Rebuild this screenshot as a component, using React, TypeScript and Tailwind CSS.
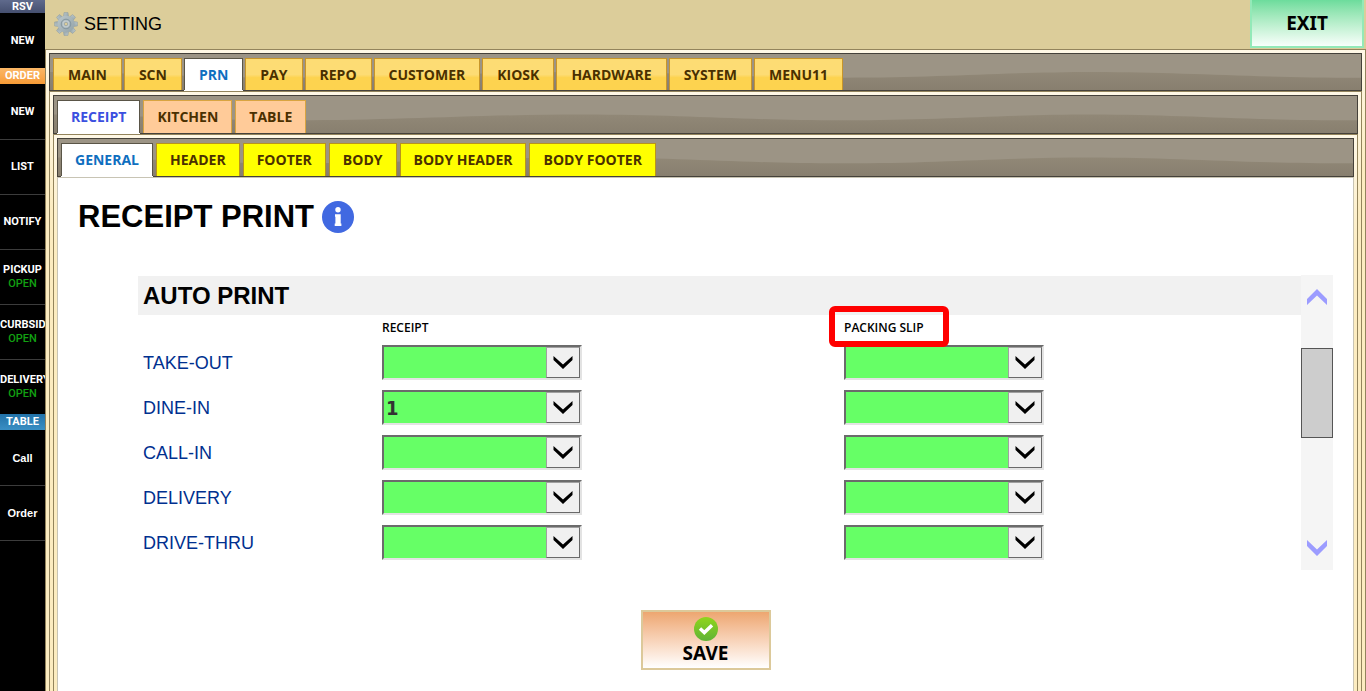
import { useState } from 'react';
import type { ReactNode } from 'react';
import clsx from 'clsx';

type SideItem = {
    label: string;
    status?: string;
    first?: boolean;
    mixed?: boolean;
};

type TabBarProps = {
    label: string;
    tabs: string[];
    active: string;
    onSelect: (tab: string) => void;
    gapClass: string;
    sizeClass: string;
    tabClass: string;
    activeClass: string;
};

const RSV_ITEMS: SideItem[] = [{ label: 'NEW', first: true }];

const ORDER_ITEMS: SideItem[] = [
    { label: 'NEW', first: true },
    { label: 'LIST' },
    { label: 'NOTIFY' },
    { label: 'PICKUP', status: 'OPEN' },
    { label: 'CURBSIDE', status: 'OPEN' },
    { label: 'DELIVERY', status: 'OPEN' },
];

const TABLE_ITEMS: SideItem[] = [
    { label: 'Call', first: true, mixed: true },
    { label: 'Order', mixed: true },
];

const MAIN_TABS = ['MAIN', 'SCN', 'PRN', 'PAY', 'REPO', 'CUSTOMER', 'KIOSK', 'HARDWARE', 'SYSTEM', 'MENU11'];
const PRN_TABS = ['RECEIPT', 'KITCHEN', 'TABLE'];
const RECEIPT_TABS = ['GENERAL', 'HEADER', 'FOOTER', 'BODY', 'BODY HEADER', 'BODY FOOTER'];

const ORDER_TYPES = ['TAKE-OUT', 'DINE-IN', 'CALL-IN', 'DELIVERY', 'DRIVE-THRU'];

function SideButton({ item }: { item: SideItem }) {
    return (
        <button
            className={clsx(
                'flex h-[55px] w-full flex-col items-center-safe justify-center overflow-hidden border-t text-[11px] leading-[14px] font-bold text-white',
                item.first ? 'border-black' : 'border-[#3c3c3c]',
                item.mixed ? 'font-["Liberation_Sans",sans-serif]' : 'font-[Roboto,sans-serif]'
            )}
        >
            <span>{item.label}</span>
            {item.status && <span className="font-medium text-[#12a012]">{item.status}</span>}
        </button>
    );
}

function SideHeading({ children, className }: { children: ReactNode; className: string }) {
    return (
        <h2 className={clsx('flex items-center justify-center font-[Roboto,sans-serif] text-[11px] leading-3 font-bold text-white', className)}>
            {children}
        </h2>
    );
}

function Sidebar() {
    return (
        <nav className="w-[45px] shrink-0 overflow-hidden bg-black">
            <SideHeading className="h-[13px] bg-linear-to-b from-[#5f6a8c] to-[#454f6f]">RSV</SideHeading>
            {RSV_ITEMS.map(item => <SideButton key={item.label} item={item} />)}
            <SideHeading className="h-4 bg-linear-to-b from-[#fbb766] to-[#f79b35]">ORDER</SideHeading>
            {ORDER_ITEMS.map(item => <SideButton key={item.label} item={item} />)}
            <SideHeading className="h-4 bg-linear-to-b from-[#2272a8] to-[#3a8fc4]">TABLE</SideHeading>
            {TABLE_ITEMS.map(item => <SideButton key={item.label} item={item} />)}
            <div className="border-t border-[#3c3c3c]" />
        </nav>
    );
}

function GearIcon() {
    return (
        <svg className="size-6" viewBox="0 0 24 24" aria-hidden="true">
            <defs>
                <linearGradient id="gear" x1="0" y1="0" x2="1" y2="1">
                    <stop offset="0" stopColor="#bcc8cc" />
                    <stop offset="1" stopColor="#93a2a7" />
                </linearGradient>
            </defs>
            <g fill="url(#gear)" stroke="#8b989c" strokeWidth="0.5">
                {[0, 45, 90, 135, 180, 225, 270, 315].map(angle => (
                    <path key={angle} d="M9.4 5 L10 0.6 H14 L14.6 5 Z" transform={`rotate(${angle} 12 12)`} />
                ))}
            </g>
            <circle cx="12" cy="12" r="8.6" fill="url(#gear)" />
            <circle cx="12" cy="12" r="4.8" fill="none" stroke="#8496a0" strokeWidth="1" />
            <circle cx="12" cy="12" r="3.4" fill="#c3cdd0" />
            <circle cx="12" cy="12" r="1.8" fill="#dccd9a" stroke="#84949a" strokeWidth="0.6" />
        </svg>
    );
}

function InfoIcon() {
    return (
        <svg className="size-8" viewBox="0 0 32 32" aria-hidden="true">
            <circle cx="16" cy="16" r="16" fill="#4169e1" />
            <circle cx="16" cy="8.7" r="2.7" fill="#fff" />
            <path d="M13 13.3h5.7v9.2h.7V25h-6.7v-2.5h.7v-6.7H13z" fill="#fff" />
        </svg>
    );
}

function CheckIcon() {
    return (
        <svg className="size-6" viewBox="0 0 24 24" aria-hidden="true">
            <defs>
                <linearGradient id="check" x1="0" y1="0" x2="0" y2="1">
                    <stop offset="0" stopColor="#90d51c" />
                    <stop offset="1" stopColor="#5fb336" />
                </linearGradient>
            </defs>
            <circle cx="12" cy="12" r="12" fill="url(#check)" />
            <path d="M6 11.6 L10.3 15.6 L18 8.2" fill="none" stroke="#fff" strokeWidth="3.4" />
        </svg>
    );
}

function ScrollArrow({ down }: { down?: boolean }) {
    return (
        <svg className={clsx('h-4 w-5', down && 'rotate-180')} viewBox="0 0 20 16" aria-hidden="true">
            <path d="M10 0 L20 10 V16 L10 6.5 L0 16 V10 Z" fill="#9c9cff" />
        </svg>
    );
}

function Wave() {
    return (
        <svg className="absolute inset-0 size-full" viewBox="0 0 1305 38" preserveAspectRatio="none" aria-hidden="true">
            <defs>
                <linearGradient id="wave" x1="0" y1="0" x2="0" y2="1">
                    <stop offset="0" stopColor="#918877" />
                    <stop offset="1" stopColor="#887f6f" />
                </linearGradient>
            </defs>
            <path
                d="M0 19 C80 19 140 25 240 25 C350 25 420 19 530 19 C630 19 690 25 790 25 C890 25 950 19 1040 19 C1130 19 1190 25 1305 25 V38 H0 Z"
                fill="url(#wave)"
            />
        </svg>
    );
}

function TabBar({ label, tabs, active, onSelect, gapClass, sizeClass, tabClass, activeClass }: TabBarProps) {
    return (
        <div className="relative border border-[#45413a] bg-[#9c9485]">
            <Wave />
            <div role="tablist" aria-label={label} className={clsx('relative flex px-[3px] pt-1', gapClass)}>
                {tabs.map(tab => (
                    <button
                        key={tab}
                        role="tab"
                        aria-selected={tab === active}
                        onClick={() => onSelect(tab)}
                        className={clsx(
                            'border border-b-0 font-["Open_Sans",sans-serif] text-sm font-bold whitespace-nowrap',
                            sizeClass,
                            tab === active ? clsx('border-[#5a5547] bg-white shadow-[0_1px_0_#fff]', activeClass) : tabClass
                        )}
                    >
                        {tab}
                    </button>
                ))}
            </div>
        </div>
    );
}

function Frame({ children }: { children: ReactNode }) {
    return (
        <div className="flex flex-1 flex-col border border-b-0 border-[#93845c] bg-[linear-gradient(#fff8e6,#fcecc0_120px)]">
            {children}
        </div>
    );
}

function CountSelect({ id, label, value }: { id: string; label: string; value: string }) {
    const [count, setCount] = useState(value);

    return (
        <div className="relative h-[35px] w-[200px] border-2 border-t-[#6b6b6b] border-r-[#e3e3e3] border-b-[#e3e3e3] border-l-[#6b6b6b] bg-[#66ff66]">
            <select
                id={id}
                aria-label={label}
                value={count}
                onChange={e => setCount(e.target.value)}
                className='block size-full appearance-none pl-[2px] font-["DejaVu_Sans_Condensed","DejaVu_Sans",sans-serif] text-[20px] font-bold text-[#333333] outline-none'
            >
                <option value=""></option>
                <option value="1">1</option>
                <option value="2">2</option>
                <option value="3">3</option>
            </select>
            <span className="pointer-events-none absolute inset-y-0 right-0 flex w-[34px] items-center justify-center border border-t-[#a0a0a0] border-r-[#696969] border-b-[#696969] border-l-[#a0a0a0] bg-[#f0f0f0]">
                <svg className="h-[13px] w-5" viewBox="0 0 20 13" aria-hidden="true">
                    <path d="M0.5 0 L10 8.6 L19.5 0 V4 L10 13 L0.5 4 Z" fill="#000" />
                </svg>
            </span>
        </div>
    );
}

function AutoPrint() {
    return (
        <section className="mt-10 mr-5 ml-20 flex h-[295px] text-[#00308f]">
            <div className="flex-1 pt-px">
                <h2 className='flex h-[39px] items-center bg-[#f1f1f1] pl-[5px] font-["Liberation_Sans",sans-serif] text-2xl font-bold text-black'>
                    AUTO PRINT
                </h2>
                <div className="grid grid-cols-[239px_462fr_457fr] pl-[5px]">
                    <div className='col-start-2 flex h-[30px] items-center pb-[5px] font-["Open_Sans",sans-serif] text-xs font-semibold text-black'>
                        RECEIPT
                    </div>
                    <div className='relative flex h-[30px] items-center pb-[5px] font-["Open_Sans",sans-serif] text-xs font-semibold text-black'>
                        PACKING SLIP
                        <span className="absolute -top-[9px] -left-[15px] z-10 h-[41px] w-[120px] rounded-md border-6 border-[#ff0000]" />
                    </div>
                </div>
                {ORDER_TYPES.map(type => (
                    <div key={type} className="grid h-[45px] grid-cols-[239px_462fr_457fr] pl-[5px]">
                        <label
                            htmlFor={`receipt-${type}`}
                            className='flex h-[35px] items-center font-["Liberation_Sans",sans-serif] text-lg'
                        >
                            {type}
                        </label>
                        <CountSelect id={`receipt-${type}`} label={`${type} receipt`} value={type === 'DINE-IN' ? '1' : ''} />
                        <CountSelect id={`packing-${type}`} label={`${type} packing slip`} value="" />
                    </div>
                ))}
            </div>
            <div className="flex w-8 flex-col items-center bg-[#f5f5f5]">
                <button aria-label="Scroll up" className="flex h-[73px] w-full justify-center pt-[14px]">
                    <ScrollArrow />
                </button>
                <div className="h-[90px] w-full border border-[#555555] bg-[#cdcdcd]" />
                <button aria-label="Scroll down" className="flex w-full flex-1 items-end justify-center pb-[14px]">
                    <ScrollArrow down />
                </button>
            </div>
        </section>
    );
}

export default function App() {
    const [mainTab, setMainTab] = useState('PRN');
    const [prnTab, setPrnTab] = useState('RECEIPT');
    const [receiptTab, setReceiptTab] = useState('GENERAL');

    return (
        <div className="flex h-screen overflow-hidden bg-white">
            <Sidebar />
            <main className="flex min-w-0 flex-1 flex-col">
                <header className="flex h-[49px] shrink-0 items-start justify-between bg-[#dccd9a] pr-[2px] pl-[9px]">
                    <div className="flex h-12 items-center gap-[6px]">
                        <GearIcon />
                        <h1 className='font-["Liberation_Sans",sans-serif] text-lg text-black'>SETTING</h1>
                    </div>
                    <button className='h-12 w-[114px] border-2 border-t-0 border-[#93e9b8] bg-linear-to-b from-[#6cdc9c] to-[#f8fffb] font-["Noto_Sans",sans-serif] text-[19px] font-bold text-black'>
                        EXIT
                    </button>
                </header>

                <Frame>
                    <div className="px-[3px] pt-[3px]">
                        <TabBar
                            label="Settings"
                            tabs={MAIN_TABS}
                            active={mainTab}
                            onSelect={setMainTab}
                            gapClass="gap-[2px]"
                            sizeClass="h-8 px-[14px]"
                            tabClass="border-[#c8962a] bg-linear-to-b from-[#fddc74] from-50% to-[#fdd34f] to-60% text-[#4a3000]"
                            activeClass="text-[#0f6fbf]"
                        />
                    </div>
                    <div className="flex flex-1 flex-col px-[3px]">
                        <Frame>
                            <div className="px-[3px] pt-[3px]">
                                <TabBar
                                    label="Printer"
                                    tabs={PRN_TABS}
                                    active={prnTab}
                                    onSelect={setPrnTab}
                                    gapClass="gap-[3px]"
                                    sizeClass="h-[33px] px-[13px]"
                                    tabClass="border-[#d9a441] bg-[#ffcb99] text-[#4a3000]"
                                    activeClass="text-[#3b50e0]"
                                />
                            </div>
                            <div className="flex flex-1 flex-col px-[3px]">
                                <Frame>
                                    <div className="px-[3px] pt-[3px]">
                                        <TabBar
                                            label="Receipt"
                                            tabs={RECEIPT_TABS}
                                            active={receiptTab}
                                            onSelect={setReceiptTab}
                                            gapClass="gap-[3px]"
                                            sizeClass="h-[33px] px-[13px]"
                                            tabClass="border-[#b8931c] bg-[#ffff00] text-[#4a3000]"
                                            activeClass="text-[#0f6fbf]"
                                        />
                                    </div>
                                    <div className="mx-[3px] flex-1 border border-b-0 border-[#c8c4b4] bg-white">
                                        <div className="flex items-center gap-2 pt-[21px] pl-5">
                                            <h2 className='font-["Liberation_Sans",sans-serif] text-[31px] leading-9 font-bold text-black'>
                                                RECEIPT PRINT
                                            </h2>
                                            <button aria-label="Receipt print help">
                                                <InfoIcon />
                                            </button>
                                        </div>
                                        <AutoPrint />
                                        <div className="mt-10 flex justify-center">
                                            <button className='flex h-[60px] w-[130px] flex-col items-center border-2 border-[#dcc99a] bg-linear-to-b from-[#eda670] to-white pt-[5px] font-["Noto_Sans",sans-serif] text-[19px] leading-6 font-bold text-black'>
                                                <CheckIcon />
                                                SAVE
                                            </button>
                                        </div>
                                    </div>
                                </Frame>
                            </div>
                        </Frame>
                    </div>
                </Frame>
            </main>
        </div>
    );
}
